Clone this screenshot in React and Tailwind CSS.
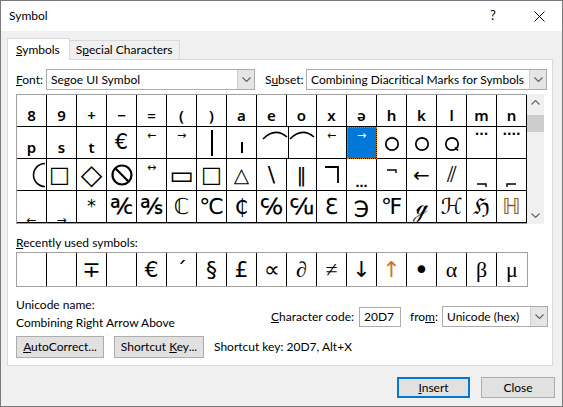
import React from "react"

const SYM = "font-['DejaVu_Sans',sans-serif]"
const SERIF = "font-['Liberation_Serif',serif]"

const U = ({ children }) => <span className="underline underline-offset-[1px]">{children}</span>

function Chevron({ up }) {
  return (
    <svg width="9" height="5" viewBox="0 0 9 5" className={up ? "rotate-180" : ""}>
      <path d="M0.5 0.5 L4.5 4.5 L8.5 0.5" fill="none" stroke="#606060" strokeWidth="1.1" />
    </svg>
  )
}

function Combo({ value, w }) {
  return (
    <div className={`flex h-[21px] border border-[#acacac] bg-white ${w}`}>
      <div className="flex-1 pl-[4px] leading-[19px] whitespace-nowrap overflow-hidden">{value}</div>
      <div className="w-[17px] border-l border-[#cfcfcf] bg-[#e5e5e5] flex items-center justify-center">
        <Chevron />
      </div>
    </div>
  )
}

const Arc = () => (
  <svg width="26" height="10" viewBox="0 0 26 10">
    <path d="M1 9 Q13 -3 25 7" fill="none" stroke="#000" strokeWidth="1.6" />
  </svg>
)

const Hook = ({ left }) => (
  <svg width="11" height="5" viewBox="0 0 11 5">
    <path d={left ? "M1 4 V1 H10" : "M1 1 H10 V4"} fill="none" stroke="#000" strokeWidth="1.4" />
  </svg>
)

const Ring = ({ tail }) => (
  <svg width="16" height="16" viewBox="0 0 16 16">
    <circle cx="8" cy="8" r="6.2" fill="none" stroke="#000" strokeWidth="1.7" />
    {tail && <path d="M11 11.5 L14 14.5" stroke="#000" strokeWidth="1.7" />}
  </svg>
)

const r1 = "items-end justify-center pb-[3px] font-['Noto_Sans',sans-serif] font-semibold text-[15px] leading-none"
const cen = `items-center justify-center ${SYM} text-[22px] leading-none`
const top = `items-start justify-center pt-[3px] ${SYM} text-[11px] leading-none`
const dots = `items-start justify-center pt-[1px] ${SYM} text-[12px] leading-none font-bold`

const rows = [
  ["8", "9", "+", "−", "=", "(", ")", "a", "e", "o", "x", "ə", "h", "k", "l", "m", "n"].map((g) => ({ g, cls: r1 })),
  [
    { g: "p", cls: r1 },
    { g: "s", cls: r1 },
    { g: "t", cls: r1 },
    { g: "€", cls: `items-center justify-center ${SYM} text-[21px] leading-none` },
    { g: "←", cls: top },
    { g: "→", cls: top },
    { g: <div className="w-[2px] h-[26px] bg-black" />, cls: "items-center justify-center" },
    { g: <div className="w-[2px] h-[11px] bg-black mt-[10px]" />, cls: "items-center justify-center" },
    { g: <Arc />, cls: "items-start justify-end pt-[3px] -mr-[2px]" },
    { g: <Arc />, cls: "items-start justify-center pt-[3px]" },
    { g: "←", cls: top },
    { g: "→", cls: `items-start justify-center pt-[3px] ${SYM} text-[11px] leading-none bg-[#0078d7] text-white outline outline-1 outline-dotted outline-[#e07b1b] -outline-offset-1` },
    { g: <Ring />, cls: "items-center justify-center pt-[3px]" },
    { g: <Ring />, cls: "items-center justify-center pt-[3px]" },
    { g: <Ring tail />, cls: "items-center justify-center pt-[3px]" },
    { g: "···", cls: dots },
    { g: "····", cls: dots },
  ],
  [
    {
      g: (
        <svg width="14" height="26" viewBox="0 0 14 26">
          <path d="M13 1.5 A11.5 11.5 0 0 0 13 24.5" fill="none" stroke="#000" strokeWidth="1.6" />
        </svg>
      ),
      cls: "items-center justify-end",
    },
    { g: "□", cls: `items-center justify-start pl-[2px] ${SYM} text-[22px] leading-none` },
    { g: "◇", cls: `items-center justify-center ${SYM} text-[28px] leading-none` },
    {
      g: (
        <svg width="22" height="22" viewBox="0 0 22 22">
          <circle cx="11" cy="11" r="9.5" fill="none" stroke="#000" strokeWidth="2.2" />
          <path d="M4.3 4.3 L17.7 17.7" stroke="#000" strokeWidth="2.2" />
        </svg>
      ),
      cls: "items-center justify-center",
    },
    { g: "↔", cls: top },
    { g: "▭", cls: `items-center justify-center ${SYM} text-[26px] leading-none` },
    { g: "□", cls: `items-center justify-center ${SYM} text-[22px] leading-none` },
    { g: "△", cls: `items-center justify-center ${SYM} text-[20px] leading-none` },
    { g: "\\", cls: `items-center justify-center ${SYM} text-[22px] leading-none` },
    { g: "‖", cls: `items-center justify-center ${SYM} text-[20px] leading-none` },
    {
      g: (
        <svg width="16" height="18" viewBox="0 0 16 18">
          <path d="M1 1 H14 V17" fill="none" stroke="#000" strokeWidth="1.8" />
        </svg>
      ),
      cls: "items-center justify-center",
    },
    { g: "…", cls: `items-end justify-center ${SYM} text-[12px] leading-none pb-[1px] font-bold` },
    { g: <Hook />, cls: "items-start justify-center pt-[10px]" },
    { g: "←", cls: `items-center justify-center ${SYM} text-[20px] leading-none` },
    { g: "⫽", cls: `items-center justify-center ${SYM} text-[22px] leading-none` },
    { g: <Hook />, cls: "items-end justify-center pb-[2px]" },
    { g: <Hook left />, cls: "items-end justify-center pb-[2px]" },
  ],
  [
    { g: "←", cls: `items-start justify-center pt-[23px] ${SYM} text-[12px] leading-none` },
    { g: "→", cls: `items-start justify-center pt-[23px] ${SYM} text-[12px] leading-none` },
    { g: "*", cls: `items-start justify-center pt-[6px] ${SYM} text-[18px] leading-none` },
    ...["℀", "℁", "ℂ", "℃", "₵", "℅", "℆", "ℇ", "℈", "℉", "ℊ", "ℋ", "ℌ"].map((g) => ({ g, cls: cen })),
    { g: "ℍ", cls: `items-center justify-center ${SYM} text-[22px] leading-none text-[#8a5518]` },
  ],
]

const recent = [
  { g: "" },
  { g: "" },
  { g: "∓", f: SYM },
  { g: "" },
  { g: "€", f: SYM },
  { g: "´", f: SYM },
  { g: "§", f: SYM },
  { g: "£", f: SYM },
  { g: "∝", f: SERIF },
  { g: "∂", f: SERIF },
  { g: "≠", f: SERIF },
  { g: "↓", f: SYM },
  { g: "↑", f: `${SYM} text-[#c27a2c]` },
  { g: "•", f: `${SYM} text-[26px]` },
  { g: "α", f: SERIF },
  { g: "β", f: SERIF },
  { g: "μ", f: SERIF },
]

export default function App() {
  return (
    <div className="w-[563px] h-[407px] bg-[#f0f0f0] border border-[#7a7a7a] flex flex-col font-['Lato',sans-serif] text-[12px] text-black overflow-hidden">
      {/* title bar */}
      <div className="h-[30px] bg-white flex items-center justify-between shrink-0">
        <span className="pl-[8px] text-[12px]">Symbol</span>
        <div className="flex h-full">
          <div className="w-[46px] flex items-center justify-center text-[13px]">?</div>
          <div className="w-[46px] flex items-center justify-center">
            <svg width="11" height="11" viewBox="0 0 11 11">
              <path d="M0.5 0.5 L10.5 10.5 M10.5 0.5 L0.5 10.5" stroke="#000" strokeWidth="1" />
            </svg>
          </div>
        </div>
      </div>

      {/* tabs */}
      <div className="flex items-end ml-[6px] mt-[7px] h-[21px] shrink-0">
        <div className="h-[22px] -mb-px relative z-10 bg-white border border-b-0 border-[#d9d9d9] pl-[8px] pr-[9px] flex items-center">
          <span>
            <U>S</U>ymbols
          </span>
        </div>
        <div className="h-[19px] bg-[#f0f0f0] border border-l-0 border-b-0 border-[#d9d9d9] px-[6px] flex items-center">
          <span>
            S<U>p</U>ecial Characters
          </span>
        </div>
      </div>

      {/* panel */}
      <div className="ml-[6px] w-[546px] h-[307px] shrink-0 bg-white border border-[#d9d9d9] pl-[8px] pr-[4px] flex flex-col">
        <div className="flex items-center mt-[9px] h-[21px]">
          <span className="w-[30px]">
            <U>F</U>ont:
          </span>
          <Combo value="Segoe UI Symbol" w="w-[209px]" />
          <span className="ml-[10px] w-[41px]">
            S<U>u</U>bset:
          </span>
          <Combo value="Combining Diacritical Marks for Symbols" w="w-[241px]" />
        </div>

        {/* symbol grid */}
        <div className="flex mt-[4px]">
          <div className="border-l border-t border-b border-[#a0a0a0] grid grid-cols-[repeat(17,30px)] h-[130px] overflow-hidden">
            {rows.flat().map((c, i) => (
              <div key={i} className={`h-[32px] border-r border-b border-black flex overflow-hidden ${c.cls}`}>
                {c.g}
              </div>
            ))}
          </div>
          <div className="w-[17px] h-[130px] bg-[#f0f0f0] flex flex-col">
            <div className="h-[17px] flex items-center justify-center">
              <Chevron up />
            </div>
            <div className="mt-[4px] h-[17px] bg-[#cdcdcd]" />
            <div className="flex-1" />
            <div className="h-[17px] flex items-center justify-center">
              <Chevron />
            </div>
          </div>
        </div>

        <div className="mt-[11px] h-[16px] leading-[16px]">
          <U>R</U>ecently used symbols:
        </div>
        <div className="mt-[1px] w-[512px] h-[35px] border border-[#a0a0a0] grid grid-cols-[repeat(17,30px)]">
          {recent.map((c, i) => (
            <div
              key={i}
              className={`flex items-center justify-center text-[22px] leading-none ${c.f || ""} ${i < 16 ? "border-r border-black" : ""}`}
            >
              {c.g}
            </div>
          ))}
        </div>

        {/* info */}
        <div className="flex justify-between items-start">
          <div className="mt-[10px] flex flex-col gap-[2px] leading-[16px]">
            <span>Unicode name:</span>
            <span>Combining Right Arrow Above</span>
          </div>
          <div className="mt-[19px] flex items-center">
            <span>
              <U>C</U>haracter code:
            </span>
            <div className="ml-[5px] w-[42px] h-[20px] border border-[#acacac] pl-[4px] leading-[18px]">20D7</div>
            <span className="ml-[9px]">
              fro<U>m</U>:
            </span>
            <div className="ml-[4px]">
              <Combo value="Unicode (hex)" w="w-[106px]" />
            </div>
          </div>
        </div>

        <div className="flex items-center mt-[5px]">
          <button className="w-[88px] h-[22px] bg-[#e1e1e1] border border-[#adadad]">
            <U>A</U>utoCorrect...
          </button>
          <button className="ml-[10px] w-[90px] h-[22px] bg-[#e1e1e1] border border-[#adadad]">
            Shortcut <U>K</U>ey...
          </button>
          <span className="ml-[10px]">Shortcut key: 20D7, Alt+X</span>
        </div>
      </div>

      {/* dialog buttons */}
      <div className="flex justify-end gap-[11px] pr-[7px] mt-[11px]">
        <button className="w-[73px] h-[21px] bg-[#e1e1e1] border-2 border-[#0078d7] leading-none">
          <U>I</U>nsert
        </button>
        <button className="w-[74px] h-[21px] bg-[#e1e1e1] border border-[#adadad] leading-none">Close</button>
      </div>
    </div>
  )
}
